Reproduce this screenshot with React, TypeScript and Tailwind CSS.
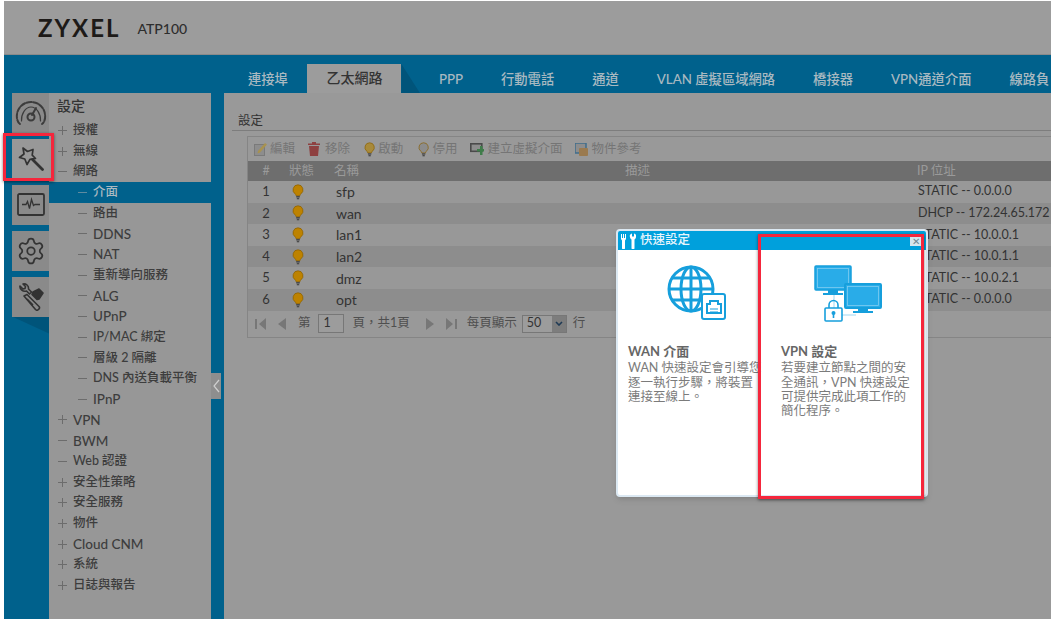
import React from 'react';
import { Settings } from 'lucide-react';

const tabs = ['PPP', '行動電話', '通道', 'VLAN 虛擬區域網路', '橋接器', 'VPN通道介面', '線路負'];

const tree = [
  { sign: '+', label: '授權' },
  { sign: '+', label: '無線' },
  { sign: '-', label: '網路' },
  { sign: '-', label: '介面', sub: true, active: true },
  { sign: '-', label: '路由', sub: true },
  { sign: '-', label: 'DDNS', sub: true },
  { sign: '-', label: 'NAT', sub: true },
  { sign: '-', label: '重新導向服務', sub: true },
  { sign: '-', label: 'ALG', sub: true },
  { sign: '-', label: 'UPnP', sub: true },
  { sign: '-', label: 'IP/MAC 綁定', sub: true },
  { sign: '-', label: '層級 2 隔離', sub: true },
  { sign: '-', label: 'DNS 內送負載平衡', sub: true },
  { sign: '-', label: 'IPnP', sub: true },
  { sign: '+', label: 'VPN' },
  { sign: '-', label: 'BWM' },
  { sign: '-', label: 'Web 認證' },
  { sign: '+', label: '安全性策略' },
  { sign: '+', label: '安全服務' },
  { sign: '+', label: '物件' },
  { sign: '+', label: 'Cloud CNM' },
  { sign: '+', label: '系統' },
  { sign: '+', label: '日誌與報告' },
];

const rows = [
  { id: 1, name: 'sfp', ip: 'STATIC -- 0.0.0.0' },
  { id: 2, name: 'wan', ip: 'DHCP -- 172.24.65.172' },
  { id: 3, name: 'lan1', ip: 'STATIC -- 10.0.0.1' },
  { id: 4, name: 'lan2', ip: 'STATIC -- 10.0.1.1' },
  { id: 5, name: 'dmz', ip: 'STATIC -- 10.0.2.1' },
  { id: 6, name: 'opt', ip: 'STATIC -- 0.0.0.0' },
];

const Bulb = ({ fill = '#bd8200', size = 16 }: { fill?: string; size?: number }) => (
  <svg width={size * 0.75} height={size} viewBox="0 0 12 16">
    <path d="M6 .8a5 5 0 0 0-3 9c.7.6 1 1.1 1 1.9h4c0-.8.3-1.3 1-1.9a5 5 0 0 0-3-9z" fill={fill} stroke="#8a5e00" strokeWidth=".7" />
    <rect x="4.200" y="12" width="3.600" height="1.500" fill="#4b4b4b" />
    <rect x="4.800" y="13.800" width="2.400" height="1.500" fill="#4b4b4b" />
  </svg>
);

const TreeSign = ({ sign, color }: { sign: string; color: string }) => (
  <svg width="9" height="9" viewBox="0 0 9 9" stroke={color} strokeWidth="1">
    <path d="M0 4.500h9" />
    {sign === '+' && <path d="M4.500 0v9" />}
  </svg>
);

const GaugeIcon = () => (
  <svg width="32" height="28" viewBox="0 0 32 28" fill="none" stroke="#3c3c3c" strokeWidth="2" strokeLinecap="round">
    <path d="M5 25C2 23 1.500 18 2 15 3 8 9 3 16 3s13 5 14 12c.5 3 0 8-3 10" strokeDasharray="5 1.600" />
    <path d="M6.500 22c-.5-7 4-14 9.500-14s10 7 9.500 14" strokeWidth="1.200" />
    <circle cx="16" cy="18" r="3.500" />
    <path d="M17 16l4-7" />
  </svg>
);

const WandIcon = () => (
  <svg width="26" height="26" viewBox="0 0 26 26" fill="none" stroke="#333" strokeWidth="1.700" strokeLinejoin="round">
    <path d="M5 2l4.500 3.500L15 3.500l-.8 5.700 3.300 3.300-5.500.8L9 18.500 6.800 13 1.500 11.500l4.500-3.500z" />
    <path d="M14.500 13.500l10 10" strokeWidth="2.800" strokeLinecap="round" />
  </svg>
);

const MonitorIcon = () => (
  <svg width="28" height="24" viewBox="0 0 28 24" fill="none" stroke="#333">
    <rect x="1" y="1" width="26" height="21" rx="1.500" strokeWidth="1.800" />
    <path d="M5 11.500h4l1.500-3 2 7 2-9 2 6 1.500-1h5" strokeWidth="1.300" />
  </svg>
);

const ToolsIcon = () => (
  <svg width="28" height="28" viewBox="0 0 28 28" fill="none" stroke="#333" strokeWidth="1.600" strokeLinejoin="round">
    <path d="M3 3l3 3 2-.5.500-2L6 1c3-.5 6 1.500 5.500 5l3 3-2 2-3-3C6 9 2.500 6.500 3 3z" />
    <path d="M16 9l6-3 4 4-4 6-2 .5-5-5z" fill="#333" />
    <path d="M7 13l3-1.500 12 12c1 1 .5 2-.5 3s-2 1-3 0z" />
    <path d="M10 16l6 6" />
  </svg>
);

const GlobeIcon = () => (
  <svg width="60" height="56" viewBox="0 0 60 56" fill="none" stroke="#169fdc">
    <g strokeWidth="3">
      <circle cx="24" cy="24" r="22" />
      <ellipse cx="24" cy="24" rx="10" ry="22" />
      <path d="M24 2v44M2 24h44M5 13h38M5 35h38" />
    </g>
    <rect x="35" y="29" width="23" height="25" rx="2" fill="#fff" strokeWidth="2" />
    <path d="M40 48v-9h3v-3h8v3h3v9z" strokeWidth="2" />
    <path d="M43 44h8M43 47h8" strokeWidth="1" />
  </svg>
);

const VpnIcon = () => (
  <svg width="70" height="58" viewBox="0 0 70 58">
    <path d="M20 28v18M28 50h14" stroke="#9fd8f2" strokeWidth="1" />
    <rect x="1" y="1" width="36" height="24" rx="1" fill="#29ace8" stroke="#169fdc" strokeWidth="1.500" />
    <rect x="3.500" y="3.500" width="31" height="19" fill="none" stroke="#7fcdf0" strokeWidth=".8" />
    <path d="M14 25h10v3h5v2H9v-2h5z" fill="#169fdc" />
    <rect x="31" y="19" width="36" height="24" rx="1" fill="#29ace8" stroke="#169fdc" strokeWidth="2" />
    <rect x="33.500" y="21.500" width="31" height="19" fill="none" stroke="#7fcdf0" strokeWidth=".8" />
    <path d="M44 43h10v3h5v2H39v-2h5z" fill="#169fdc" />
    <rect x="11" y="43" width="17" height="13" rx="1" fill="#fff" stroke="#169fdc" strokeWidth="1.600" />
    <path d="M15 43v-3a4.500 4.500 0 0 1 9 0v3" fill="none" stroke="#169fdc" strokeWidth="1.600" />
    <circle cx="19.500" cy="48" r="2" fill="#169fdc" />
    <path d="M19.500 49v4" stroke="#169fdc" strokeWidth="1.600" />
  </svg>
);

const QuickIcon = () => (
  <svg width="15" height="16" viewBox="0 0 15 16" fill="#fff">
    <path d="M0 1h1v4h1V1h1v4h1V1h1v5L4 7.500V15a1.200 1.200 0 0 1-3 0V7.500L0 6z" />
    <path d="M9 4a2.500 2.500 0 0 1 2-3.500V3.500h2V.5A2.500 2.500 0 0 1 15 4c0 1.200-.8 2-1.500 2.500V15a1.500 1.500 0 0 1-3 0V6.500C9.800 6 9 5.200 9 4z" />
  </svg>
);

const EditIcon = () => (
  <svg width="13" height="14" viewBox="0 0 13 14">
    <rect x=".5" y="2.500" width="10" height="11" fill="#8d8d8d" stroke="#7a7a7a" />
    <path d="M4 9l7-8 2 1.500-7 8-2.500 1z" fill="#a8924f" />
  </svg>
);

const TrashIcon = () => (
  <svg width="12" height="14" viewBox="0 0 12 14" fill="#8e4040">
    <path d="M4 0h4v1.500h4V3H0V1.500h4z" />
    <path d="M1 4h10l-1 10H2z" />
  </svg>
);

const AddIcon = () => (
  <svg width="14" height="13" viewBox="0 0 14 13">
    <rect x=".8" y=".8" width="11" height="7.500" fill="#8d8d8d" stroke="#4a4a4a" strokeWidth="1.600" />
    <path d="M7 6h3V3h2.500v3H14v2.500h-1.500V12H10V8.500H7z" fill="#3f7d4a" />
  </svg>
);

const BoxIcon = () => (
  <svg width="13" height="13" viewBox="0 0 13 13">
    <rect x="0" y="0" width="11" height="10" fill="#8d8d8d" stroke="#3f6d8c" strokeWidth="1.500" />
    <rect x="4" y="5" width="9" height="8" rx="1" fill="#9a7a4f" />
  </svg>
);

const PagerArrow = ({ dir, bar }: { dir: 'left' | 'right'; bar?: boolean }) => (
  <svg width={bar ? 11 : 8} height="12" viewBox={bar ? '0 0 11 12' : '0 0 8 12'} fill="#777">
    {dir === 'left' ? (
      bar ? <path d="M0 1h2v10H0zM11 0v12L4 6z" /> : <path d="M8 0v12L0 6z" />
    ) : (
      bar ? <path d="M0 0v12l7-6zM9 1h2v10H9z" /> : <path d="M0 0v12l8-6z" />
    )}
  </svg>
);

const sideIcons = [
  { icon: <GaugeIcon />, bg: 'bg-[#8a8a8a]' },
  { icon: <WandIcon />, bg: 'bg-[#989898]' },
  { icon: <MonitorIcon />, bg: 'bg-[#8a8a8a]' },
  { icon: <Settings size={30} strokeWidth={1.4} color="#333" />, bg: 'bg-[#8a8a8a]' },
  { icon: <ToolsIcon />, bg: 'bg-[#8a8a8a]' },
];

const Toolbar = () => (
  <div className="flex h-6 items-center pl-[6px] text-[12.500px] whitespace-nowrap text-[#757575]">
    <span className="mr-[3px] flex"><EditIcon /></span>
    <span className="mr-[13px]">編輯</span>
    <span className="mr-[5px] flex"><TrashIcon /></span>
    <span className="mr-[14px]">移除</span>
    <span className="mr-[3px] flex"><Bulb fill="#a88a3a" size={15} /></span>
    <span className="mr-[15px]">啟動</span>
    <span className="mr-[3px] flex"><Bulb fill="#8c8c8c" size={15} /></span>
    <span className="mr-[12px]">停用</span>
    <span className="mr-[4px] flex"><AddIcon /></span>
    <span className="mr-[12px]">建立虛擬介面</span>
    <span className="mr-[4px] flex"><BoxIcon /></span>
    <span>物件參考</span>
  </div>
);

const Pager = () => (
  <div className="flex h-[26px] items-center pl-[7px] text-[12.500px] whitespace-nowrap text-[#4f4f4f]">
    <span className="mr-[12px] flex"><PagerArrow dir="left" bar /></span>
    <span className="mr-[12px] flex"><PagerArrow dir="left" /></span>
    <span className="mr-[7px]">第</span>
    <span className="mr-[9px] flex h-[19px] w-[26px] items-center border border-[#777] bg-[#9c9c9c] pl-[5px] text-[#333]">1</span>
    <span className="mr-[16px]">頁，共1頁</span>
    <span className="mr-[12px] flex"><PagerArrow dir="right" /></span>
    <span className="mr-[10px] flex"><PagerArrow dir="right" bar /></span>
    <span className="mr-[5px]">每頁顯示</span>
    <span className="mr-[6px] flex h-[18px] w-[45px] items-center border border-[#777] bg-[#9c9c9c] text-[#333]">
      <span className="flex-1 pl-[4px]">50</span>
      <span className="flex h-full w-[14px] items-center justify-center bg-[#7d7d7d]">
        <svg width="8" height="5" viewBox="0 0 8 5" fill="none" stroke="#1f3a55" strokeWidth="1.600"><path d="M1 1l3 3 3-3" /></svg>
      </span>
    </span>
    <span>行</span>
  </div>
);

const QuickSetup = () => (
  <div className="absolute top-[229px] left-[616px] flex h-[268px] w-[312px] flex-col overflow-hidden rounded-[4px] border-2 border-[#dbe8f2] bg-white shadow-md">
    <div className="flex h-[19px] shrink-0 items-center bg-[#00a0dc] pr-[5px] pl-[3px] text-[12.500px] font-medium text-[#e9f6fc]">
      <QuickIcon />
      <span className="ml-[4px] flex-1">快速設定</span>
      <span className="flex h-[11px] w-[11px] items-center justify-center bg-[#d5e6ee] text-[10px] leading-none text-[#6b8794]">✕</span>
    </div>
    <div className="flex flex-1 text-[12.500px] leading-[14.300px] text-[#7b7b7b]">
      <div className="w-[151px] overflow-hidden pl-[10px]">
        <div className="mt-[15px] ml-[39px]"><GlobeIcon /></div>
        <div className="mt-[23px] text-[13px] font-bold text-[#666]">WAN 介面</div>
        <div className="mt-[3px] whitespace-nowrap">
          WAN 快速設定會引導您<br />逐一執行步驟，將裝置<br />連接至線上。
        </div>
      </div>
      <div className="pl-[12px]">
        <div className="mt-[15px] ml-[33px]"><VpnIcon /></div>
        <div className="mt-[21px] text-[13px] font-bold text-[#666]">VPN 設定</div>
        <div className="mt-[3px] whitespace-nowrap">
          若要建立節點之間的安<br />全通訊，VPN 快速設定<br />可提供完成此項工作的<br />簡化程序。
        </div>
      </div>
    </div>
  </div>
);

export default function App() {
  return (
    <div className="relative flex h-[619px] w-[1051px] flex-col overflow-hidden bg-white pt-px pl-1 font-['Lato','Noto_Sans_CJK_TC',sans-serif]">
      {/* Header */}
      <div className="flex h-[54px] shrink-0 items-center border-b border-[#8a8a8a] bg-[#9c9c9c] pl-[34px]">
        <span className="text-[24px] font-bold tracking-[2px] text-[#1d1a18]">ZYXEL</span>
        <span className="mt-[1px] ml-[17px] text-[14px] font-medium text-[#2d2d2d]">ATP100</span>
      </div>

      <div className="flex min-h-0 flex-1 flex-col bg-[#00618c]">
        {/* Tabs */}
        <div className="flex h-[38px] shrink-0 items-end overflow-hidden pl-[224.500px] whitespace-nowrap">
          <div className="flex h-[30px] shrink-0 items-center px-[19.500px] pt-1 text-[13.300px] font-medium text-[#a9b9c1]">連接埠</div>
          <div className="flex h-[29px] w-[94px] shrink-0 items-center justify-center bg-[#9c9c9c] pb-[3px] text-[14px] font-medium text-[#333]">乙太網路</div>
          <div className="h-[29px] w-[18.500px] shrink-0 bg-[#00547a] [clip-path:polygon(0_0,100%_100%,0_100%)]" />
          {tabs.map((t) => (
            <div key={t} className="flex h-[30px] shrink-0 items-center px-[19px] pt-1 text-[13.300px] font-medium text-[#a9b9c1]">{t}</div>
          ))}
        </div>

        <div className="flex min-h-0 flex-1 pl-2">
          {/* Icon rail */}
          <div className="flex w-[37px] shrink-0 flex-col gap-[6.500px]">
            {sideIcons.map((s, i) => (
              <div key={i} className={`flex h-[39.500px] items-center justify-center ${s.bg}`}>{s.icon}</div>
            ))}
            <div className="-mt-[6.500px] h-[17px] bg-[#00547a] [clip-path:polygon(0_0,100%_100%,100%_0)]" />
          </div>

          {/* Tree */}
          <div className="w-[162px] shrink-0 bg-[#979797] text-[#3d3d3d]">
            <div className="flex h-[27px] items-center pb-[3px] pl-2 text-[14px] font-medium text-[#333]">設定</div>
            {tree.map((item) => (
              <div
                key={item.label}
                className={`flex h-[20.700px] items-center ${item.active ? 'bg-[#00618c] text-[#a9b9c1]' : ''}`}
              >
                <span className={`flex ${item.sub ? 'ml-[29px]' : 'ml-[9px]'}`}>
                  <TreeSign sign={item.sign} color={item.active ? '#5f8ba0' : '#6c6c6c'} />
                </span>
                <span className={`font-medium ${item.sub ? 'ml-[6px]' : 'ml-[6px]'} ${/^[A-Za-z ]+$/.test(item.label) ? 'text-[13.500px]' : 'text-[12.500px]'}`}>{item.label}</span>
              </div>
            ))}
          </div>

          {/* Collapse handle */}
          <div className="w-[13px] shrink-0 pt-[280px]">
            <div className="flex h-[26px] w-[10px] items-center justify-center bg-[#8e8e8e]">
              <svg width="7" height="14" viewBox="0 0 7 14" fill="none" stroke="#cfcfcf" strokeWidth="1.200"><path d="M6 1L1 7l5 6" /></svg>
            </div>
          </div>

          {/* Main */}
          <div className="min-w-0 flex-1 bg-[#999999] pt-[19px] pl-2">
            <div className="border-b border-[#7d7d7d] pb-[1px] pl-[6px] text-[12.500px] leading-[17px] text-[#333]">設定</div>
            <div className="mt-[5px] ml-[15px] w-[900px] border border-[#858585]">
              <Toolbar />
              <div className="flex h-[20px] items-center bg-[#6e6e6e] text-[12.500px] text-[#9a9a9a]">
                <span className="w-9 text-center">#</span>
                <span className="w-[50px] pl-[5px]">狀態</span>
                <span className="w-[291px]">名稱</span>
                <span className="w-[292px]">描述</span>
                <span>IP 位址</span>
              </div>
              {rows.map((r) => (
                <div key={r.id} className={`flex h-[21.600px] items-center text-[#333] ${r.id % 2 === 0 ? 'bg-[#8d8d8d]' : 'bg-[#989898]'}`}>
                  <span className="w-9 text-center text-[13px]">{r.id}</span>
                  <span className="flex w-[50px] pl-[8px]"><Bulb /></span>
                  <span className="w-[291px] pl-[2px] text-[14px]">{r.name}</span>
                  <span className="w-[292px]" />
                  <span className="pl-px text-[12.500px]">{r.ip}</span>
                </div>
              ))}
              <Pager />
            </div>
          </div>
        </div>
      </div>

      <QuickSetup />

      {/* Red callouts */}
      <div className="absolute top-[133px] left-[3px] h-[48px] w-[51px] border-[3px] border-[#f5263c] shadow-[0_1px_3px_rgba(0,0,0,0.5)]" />
      <div className="absolute top-[234px] left-[758px] h-[265px] w-[166px] border-[3px] border-[#f5263c] shadow-[0_1px_3px_rgba(0,0,0,0.5)]" />
    </div>
  );
}
